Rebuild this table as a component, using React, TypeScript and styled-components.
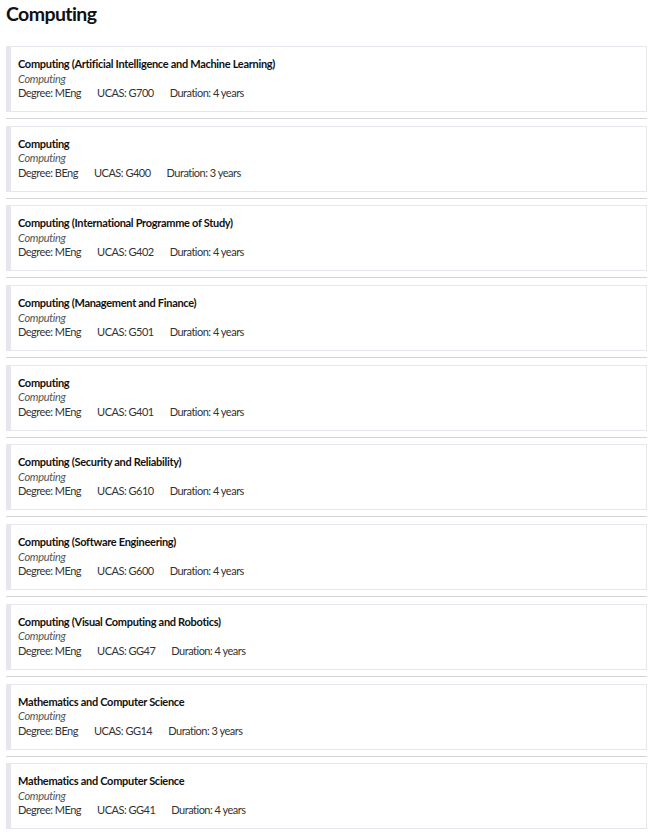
import styled, { createGlobalStyle } from 'styled-components';

const GlobalStyle = createGlobalStyle`
  html, body {
    margin: 0;
    padding: 0;
    background: #ffffff;
  }
  body {
    font-family: Lato, "Open Sans", sans-serif;
    color: #1a1a1a;
  }
`;

const Page = styled.main`
  padding: 0 6px 4px;
`;

const Heading = styled.h2`
  margin: 0;
  padding: 2px 0 0;
  font-size: 19.5px;
  font-weight: 700;
  line-height: 24px;
  letter-spacing: -0.6px;
  color: #111;
`;

const List = styled.div`
  display: flex;
  flex-direction: column;
  margin-top: 20px;
`;

const Card = styled.article`
  box-sizing: border-box;
  height: 66px;
  padding: 10px 10px 0 7px;
  border: 1px solid #e6e6ef;
  border-left: 5px solid #e6e6ef;
  background: #fff;
  display: flex;
  flex-direction: column;
  font-size: 11px;
  line-height: 14.5px;
`;

const Title = styled.div`
  font-weight: 700;
  letter-spacing: -0.3px;
  color: #111;
`;

const Department = styled.div`
  font-style: italic;
  letter-spacing: -0.3px;
  color: #555;
`;

const Meta = styled.div`
  display: flex;
  gap: 16px;
  letter-spacing: -0.5px;
  color: #333;
`;

const Divider = styled.hr`
  margin: 6px 0 6.7px;
  border: 0;
  border-top: 1px solid #d4d4d4;
  height: 0;
`;

type Course = { name: string; degree: string; ucas: string; years: number };

const courses: Course[] = [
  { name: 'Computing (Artificial Intelligence and Machine Learning)', degree: 'MEng', ucas: 'G700', years: 4 },
  { name: 'Computing', degree: 'BEng', ucas: 'G400', years: 3 },
  { name: 'Computing (International Programme of Study)', degree: 'MEng', ucas: 'G402', years: 4 },
  { name: 'Computing (Management and Finance)', degree: 'MEng', ucas: 'G501', years: 4 },
  { name: 'Computing', degree: 'MEng', ucas: 'G401', years: 4 },
  { name: 'Computing (Security and Reliability)', degree: 'MEng', ucas: 'G610', years: 4 },
  { name: 'Computing (Software Engineering)', degree: 'MEng', ucas: 'G600', years: 4 },
  { name: 'Computing (Visual Computing and Robotics)', degree: 'MEng', ucas: 'GG47', years: 4 },
  { name: 'Mathematics and Computer Science', degree: 'BEng', ucas: 'GG14', years: 3 },
  { name: 'Mathematics and Computer Science', degree: 'MEng', ucas: 'GG41', years: 4 },
];

export default function App() {
  return (
    <Page>
      <GlobalStyle />
      <Heading>Computing</Heading>
      <List>
        {courses.map((c, i) => (
          <div key={c.ucas}>
            <Card>
              <Title>{c.name}</Title>
              <Department>Computing</Department>
              <Meta>
                <span>Degree: {c.degree}</span>
                <span>UCAS: {c.ucas}</span>
                <span>Duration: {c.years} years</span>
              </Meta>
            </Card>
            {i < courses.length - 1 && <Divider />}
          </div>
        ))}
      </List>
    </Page>
  );
}
